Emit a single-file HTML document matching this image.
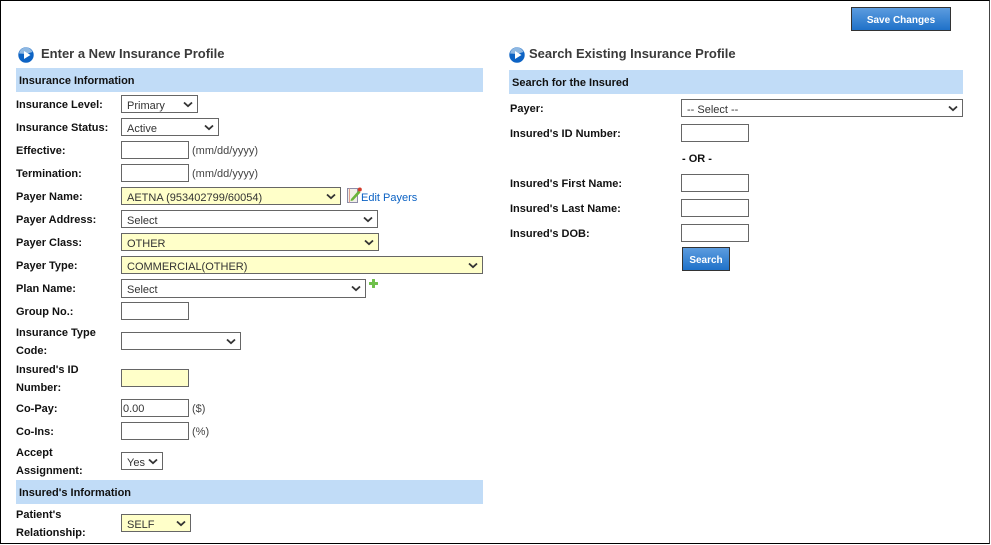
<!DOCTYPE html>
<html><head><meta charset="utf-8"><style>
html,body{margin:0;padding:0;background:#fff}
body{width:991px;height:545px;position:relative;overflow:hidden;font-family:"Liberation Sans",Arial,sans-serif;color:#000}
.a{position:absolute;white-space:nowrap}
.frame{left:0;top:0;width:988px;height:542px;border:1px solid #000;border-right-color:#444}
.l{left:16px;font-size:11px;font-weight:bold;line-height:18px;color:#111;margin-top:1px}
.h{font-size:13px;font-weight:bold;color:#3a3a3a;line-height:16px}
.band{background:#c1dcf7;height:24px;font-size:11px;font-weight:bold;line-height:26px;padding-left:3px;box-sizing:border-box;color:#111}
.s,.i{position:absolute;box-sizing:border-box;height:18px;border:1px solid #666;background:#fff;font-size:11px;line-height:20px;padding-left:5px;color:#333;white-space:nowrap}
.i{width:68px;padding-left:1px;line-height:18px}
.y{background:#ffffc9}
.s svg{position:absolute;right:4px;top:5px}
.n{font-size:11px;line-height:18px;color:#444;margin-top:1px}
.b{position:absolute;box-sizing:border-box;border:1px solid #333;background:linear-gradient(#5c9cdf,#1f71c9);color:#fff;font-size:10px;font-weight:bold;text-align:center;line-height:25px}
</style></head><body>
<svg width="0" height="0" style="position:absolute"><defs>
<symbol id="c" viewBox="0 0 10 7"><path d="M1 1.500L5 5.200L9 1.500" fill="none" stroke="#333" stroke-width="1.800"/></symbol>
<symbol id="p" viewBox="0 0 16 16"><circle cx="8" cy="8" r="7.700" fill="#0d63c4"/><path d="M1 6.500A7 7 0 0 1 14.500 5L8 7Z" fill="#8fb8e2"/><path d="M6 4L12.500 8L6 12Z" fill="#fff"/></symbol>
</defs></svg>
<div class="a frame"></div>

<div class="b" style="left:851px;top:7px;width:100px;height:24px">Save Changes</div>

<svg class="a" style="left:18px;top:47px" width="16" height="16"><use href="#p"/></svg>
<div class="a h" style="left:41px;top:46px">Enter a New Insurance Profile</div>
<div class="a band" style="left:16px;top:68px;width:467px">Insurance Information</div>

<div class="a l" style="top:95px">Insurance Level:</div>
<div class="s" style="left:121px;top:95px;width:77px">Primary<svg width="10" height="7"><use href="#c"/></svg></div>
<div class="a l" style="top:118px">Insurance Status:</div>
<div class="s" style="left:121px;top:118px;width:98px">Active<svg width="10" height="7"><use href="#c"/></svg></div>
<div class="a l" style="top:141px">Effective:</div>
<div class="i" style="left:121px;top:141px"></div>
<div class="a n" style="left:192px;top:141px">(mm/dd/yyyy)</div>
<div class="a l" style="top:164px">Termination:</div>
<div class="i" style="left:121px;top:164px"></div>
<div class="a n" style="left:192px;top:164px">(mm/dd/yyyy)</div>
<div class="a l" style="top:187px">Payer Name:</div>
<div class="s y" style="left:121px;top:187px;width:220px">AETNA (953402799/60054)<svg width="10" height="7"><use href="#c"/></svg></div>
<svg class="a" style="left:347px;top:187px" width="15" height="16" viewBox="0 0 15 16"><rect x="0.500" y="1.500" width="10" height="14" fill="#f1efe8" stroke="#8d8ca8"/><path d="M2.500 1.500V15.500" stroke="#e0a090"/><path d="M4 12L11.500 3.500L13.500 5.500L6 13.500L3.500 14Z" fill="#6ab53a"/><circle cx="12.800" cy="2.500" r="2" fill="#d23a2a"/></svg>
<div class="a" style="left:361px;top:189px;font-size:11px;line-height:18px;color:#0b62c4">Edit Payers</div>
<div class="a l" style="top:210px">Payer Address:</div>
<div class="s" style="left:121px;top:210px;width:257px">Select<svg width="10" height="7"><use href="#c"/></svg></div>
<div class="a l" style="top:233px">Payer Class:</div>
<div class="s y" style="left:121px;top:233px;width:258px">OTHER<svg width="10" height="7"><use href="#c"/></svg></div>
<div class="a l" style="top:256px">Payer Type:</div>
<div class="s y" style="left:121px;top:256px;width:362px">COMMERCIAL(OTHER)<svg width="10" height="7"><use href="#c"/></svg></div>
<div class="a l" style="top:279px">Plan Name:</div>
<div class="s" style="left:121px;top:279px;width:245px;height:19px">Select<svg width="10" height="7"><use href="#c"/></svg></div>
<svg class="a" style="left:369px;top:279px" width="9" height="9" viewBox="0 0 9 9"><path d="M3 .5Q3 0 3.500 0H5.500Q6 0 6 .5V3H8.500Q9 3 9 3.500V5.500Q9 6 8.500 6H6V8.500Q6 9 5.500 9H3.500Q3 9 3 8.500V6H.5Q0 6 0 5.500V3.500Q0 3 .5 3H3Z" fill="#6fc04a"/></svg>
<div class="a l" style="top:302px">Group No.:</div>
<div class="i" style="left:121px;top:302px"></div>
<div class="a l" style="top:323px">Insurance Type</div>
<div class="a l" style="top:341px">Code:</div>
<div class="s" style="left:121px;top:332px;width:120px"><svg width="10" height="7"><use href="#c"/></svg></div>
<div class="a l" style="top:360px">Insured's ID</div>
<div class="a l" style="top:378px">Number:</div>
<div class="i y" style="left:121px;top:369px"></div>
<div class="a l" style="top:399px">Co-Pay:</div>
<div class="i" style="left:121px;top:399px">0.00</div>
<div class="a n" style="left:192px;top:399px">($)</div>
<div class="a l" style="top:422px">Co-Ins:</div>
<div class="i" style="left:121px;top:422px"></div>
<div class="a n" style="left:192px;top:422px">(%)</div>
<div class="a l" style="top:443px">Accept</div>
<div class="a l" style="top:461px">Assignment:</div>
<div class="s" style="left:121px;top:452px;width:42px">Yes<svg width="10" height="7"><use href="#c"/></svg></div>
<div class="a band" style="left:16px;top:480px;width:467px">Insured's Information</div>
<div class="a l" style="top:505px">Patient's</div>
<div class="a l" style="top:523px">Relationship:</div>
<div class="s y" style="left:121px;top:514px;width:70px">SELF<svg width="10" height="7"><use href="#c"/></svg></div>

<svg class="a" style="left:509px;top:47px" width="16" height="16"><use href="#p"/></svg>
<div class="a h" style="left:529px;top:46px">Search Existing Insurance Profile</div>
<div class="a band" style="left:509px;top:70px;width:454px">Search for the Insured</div>
<div class="a l" style="left:510px;top:99px">Payer:</div>
<div class="s" style="left:681px;top:99px;width:282px">-- Select --<svg width="10" height="7"><use href="#c"/></svg></div>
<div class="a l" style="left:510px;top:124px">Insured's ID Number:</div>
<div class="i" style="left:681px;top:124px"></div>
<div class="a l" style="left:682px;top:149px">- OR -</div>
<div class="a l" style="left:510px;top:174px">Insured's First Name:</div>
<div class="i" style="left:681px;top:174px"></div>
<div class="a l" style="left:510px;top:199px">Insured's Last Name:</div>
<div class="i" style="left:681px;top:199px"></div>
<div class="a l" style="left:510px;top:224px">Insured's DOB:</div>
<div class="i" style="left:681px;top:224px"></div>
<div class="b" style="left:682px;top:247px;width:48px;height:24px">Search</div>
</body></html>
